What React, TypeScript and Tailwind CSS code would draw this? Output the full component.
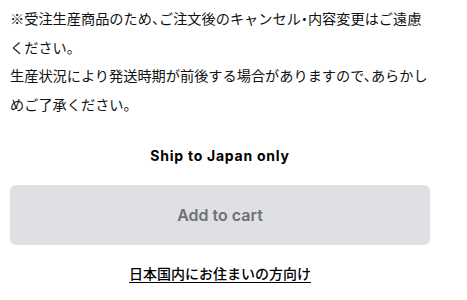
export default function App() {
  return (
    <div className="min-h-[300px] bg-white font-['Inter','Noto_Sans_CJK_JP',sans-serif] text-black">
      <div className="ml-[10px] w-[420px] pt-[4px]">
        <p className="font-['Noto_Sans_CJK_JP',sans-serif] text-[14.2px] leading-[28.7px] text-[#111] [font-feature-settings:'halt']">
          ※受注生産商品のため、ご注文後のキャンセル・内容変更はご遠慮ください。
          <br />
          生産状況により発送時期が前後する場合がありますので、あらかしめご了承ください。
        </p>

        <p className="mt-[26px] text-center text-[14px] font-bold tracking-[0.75px]">
          Ship to Japan only
        </p>

        <button
          type="button"
          disabled
          className="mt-[19px] flex h-[60px] w-full items-center justify-center rounded-[6px] bg-[#dfe0e3] text-[16px] font-semibold text-[#707075]"
        >
          Add to cart
        </button>

        <div className="mt-[16px] text-center">
          <a href="#" className="text-[14px] font-medium text-black underline underline-offset-[3px]">
            日本国内にお住まいの方向け
          </a>
        </div>
      </div>
    </div>
  );
}
